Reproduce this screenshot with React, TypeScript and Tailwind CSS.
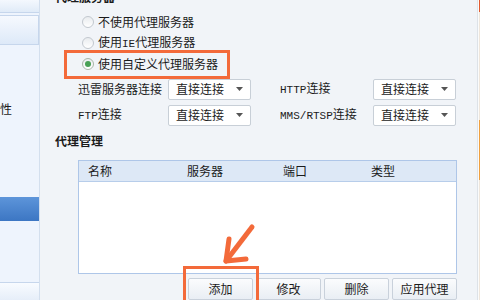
import React from "react";

const cjk = { fontFamily: '"Noto Sans CJK SC", "Noto Sans", sans-serif' };
const mono = { fontFamily: '"Liberation Mono", monospace', fontSize: "11px" };

function Radio({ checked, children }: { checked?: boolean; children: React.ReactNode }) {
  return (
    <div className="h-[21px] flex items-center gap-[4px]">
      <div
        className={
          "w-[12px] h-[12px] rounded-full border flex items-center justify-center bg-gradient-to-b from-[#e9ecef] to-[#ffffff] " +
          (checked ? "border-[#a9b6a9]" : "border-[#c2c8cf]")
        }
      >
        {checked && <div className="w-[6px] h-[6px] rounded-full bg-[#48a055]" />}
      </div>
      <span className="text-[12px] text-[#1b1b1b] leading-none">{children}</span>
    </div>
  );
}

function Select() {
  return (
    <div className="w-[83px] h-[21px] bg-white border border-[#c8cfd7] rounded-[2px] flex items-center justify-between pl-[7px] pr-[7px]">
      <span className="text-[12px] text-[#1b1b1b] leading-none">直接连接</span>
      <svg width="7" height="4" viewBox="0 0 7 4">
        <path d="M0 0 L7 0 L3.5 4 Z" fill="#555" />
      </svg>
    </div>
  );
}

function Btn({ children }: { children: React.ReactNode }) {
  return (
    <div className="w-[65px] h-[22px] border border-[#c9d1db] rounded-[2px] bg-gradient-to-b from-[#fbfcfd] to-[#e9eef4] flex items-center justify-center text-[12px] text-[#1b1b1b]">
      {children}
    </div>
  );
}

export default function App() {
  return (
    <div className="relative w-[480px] h-[300px] overflow-hidden flex bg-[#f1f4f8]" style={cjk}>
      {/* sidebar */}
      <div className="w-[40px] h-full flex flex-col bg-[#eef4fd] border-r border-[#d3dfee]">
        <div className="h-[13px] bg-gradient-to-b from-[#f4f8fe] to-[#e0ebf8] border-b border-[#c6d6ec]" />
        <div className="h-[2px]" />
        <div className="h-[30px] bg-gradient-to-b from-[#f6f9fe] to-[#dde9f8] border border-l-0 border-[#c6d6ec]" />
        <div className="h-[58px]" />
        <div className="h-[12px] flex items-center overflow-hidden">
          <span className="ml-[-12px] text-[12px] text-[#1b1b1b] leading-none whitespace-nowrap">属性</span>
        </div>
        <div className="h-[82px]" />
        <div className="h-[24px] bg-gradient-to-b from-[#5d95da] to-[#3c76c3]" />
        <div className="h-[61px]" />
        <div className="flex-1 bg-gradient-to-b from-[#f8fbff] to-[#e6eef9] border-t border-[#c6d6ec]" />
      </div>

      {/* main */}
      <div className="flex-1 h-full flex flex-col pl-[15px]">
        <div className="h-[3px] overflow-hidden flex items-end">
          <span className="text-[12px] font-bold text-[#1b1b1b] leading-[12px] whitespace-nowrap">代理服务器</span>
        </div>
        <div className="ml-[27px] mt-[9px] flex flex-col">
          <Radio>不使用代理服务器</Radio>
          <Radio>
            使用<span style={mono}>IE</span>代理服务器
          </Radio>
          <Radio checked>使用自定义代理服务器</Radio>
        </div>

        <div className="ml-[23px] mt-[4px] grid grid-cols-[90px_83px_29px_93px_83px] grid-rows-[21px_21px] gap-y-[5px] items-center text-[12px] text-[#1b1b1b]">
          <span className="leading-none">迅雷服务器连接</span>
          <Select />
          <div />
          <span className="leading-none">
            <span style={mono}>HTTP</span>连接
          </span>
          <Select />
          <span className="leading-none">
            <span style={mono}>FTP</span>连接
          </span>
          <Select />
          <div />
          <span className="leading-none">
            <span style={mono}>MMS/RTSP</span>连接
          </span>
          <Select />
        </div>

        <div className="mt-[7px] h-[16px] leading-[16px] text-[12px] font-bold text-[#1b1b1b]">代理管理</div>

        <div className="ml-[23px] mt-[11px] w-[379px] h-[116px] border border-[#aec6e8] bg-white flex flex-col">
          <div className="h-[21px] flex items-center bg-[#dde8f6] border-b border-[#b7cdea] text-[12px] text-[#1b1b1b]">
            <div className="w-[108px] pl-[9px]">名称</div>
            <div className="w-[96px]">服务器</div>
            <div className="w-[88px]">端口</div>
            <div className="flex-1">类型</div>
          </div>
        </div>

        <div className="ml-[133px] mt-[4px] flex gap-[3px]">
          <Btn>添加</Btn>
          <Btn>修改</Btn>
          <Btn>删除</Btn>
          <Btn>应用代理</Btn>
        </div>
      </div>

      {/* right edge */}
      <div className="w-[3px] h-full flex">
        <div className="w-[2px] h-full bg-[#fbfbfb] border-l border-[#dde2e8]" />
        <div className="w-[1px] h-full flex flex-col bg-[#efe6dc]">
          <div className="h-[12px] bg-[#e25a30]" />
          <div className="h-[108px]" />
          <div className="h-[60px] bg-[#f0a040]" />
        </div>
      </div>

      {/* annotations */}
      <div className="absolute left-[64px] top-[50px] w-[166px] h-[29px] border-[3px] border-[#f36a3a]" />
      <div className="absolute left-[183px] top-[266px] w-[76px] h-[40px] border-[3px] border-[#f36a3a]" />
      <svg className="absolute left-[215px] top-[222px]" width="45" height="45" viewBox="0 0 45 45">
        <g stroke="#f36a3a" strokeWidth="5" strokeLinecap="round" strokeLinejoin="round" fill="none">
          <path d="M37 5 L11 39" />
          <path d="M14 17 L11 39 L31 37" />
        </g>
      </svg>
    </div>
  );
}
